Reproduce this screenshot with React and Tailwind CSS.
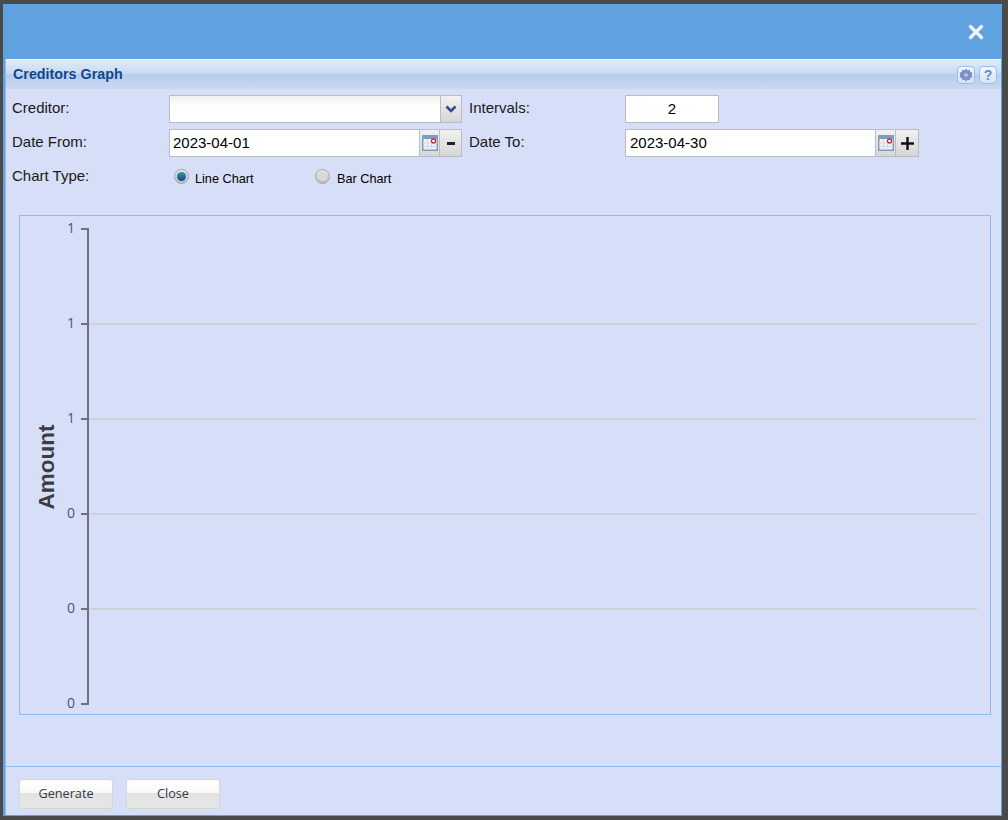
const ticks = [
  { y: 13, label: "1" },
  { y: 108, label: "1" },
  { y: 203, label: "1" },
  { y: 298, label: "0" },
  { y: 393, label: "0" },
  { y: 488, label: "0" },
];

function CalendarIcon() {
  return (
    <svg width="16" height="16" viewBox="0 0 16 16">
      <rect x="0.75" y="0.75" width="14.5" height="14.5" fill="#eef1f5" stroke="#7f9cc0" strokeWidth="1.5" />
      <rect x="1" y="1" width="14" height="3" fill="#7f9cc0" />
      <path d="M5.5 4v11M9.5 4v11M1 8h14M1 11.5h14" stroke="#d5dbe3" fill="none" />
      <circle cx="11.5" cy="6" r="2" fill="#fff" stroke="#b8303a" strokeWidth="1.3" />
    </svg>
  );
}

function SideButton({ className = "", children }) {
  return (
    <div className={"flex items-center justify-center h-full border border-l-0 border-[#b8bcc6] bg-gradient-to-b from-[#f1f1f1] to-[#d6d6d6] " + className}>
      {children}
    </div>
  );
}

function DateField({ value, className = "" }) {
  return (
    <div className={"flex items-center w-[251px] h-[28px] bg-white border border-[#b8bcc6] text-[15px] text-black " + className}>
      {value}
    </div>
  );
}

function TitleIcon({ children }) {
  return (
    <div className="flex items-center justify-center w-[18px] h-[18px] rounded-[4px] border border-[#9dbde8] bg-gradient-to-b from-[#f1f6fc] to-[#d5e3f5]">
      {children}
    </div>
  );
}

function Radio({ checked, label, className = "" }) {
  return (
    <div className={"flex items-start gap-[6px] text-[12.7px] leading-[16px] text-black " + className}>
      <div className="flex items-center justify-center w-[15px] h-[15px] rounded-full border border-[#a5a5a5] bg-gradient-to-b from-[#e8e8e8] to-[#bdbdbd]">
        {checked ? <div className="w-[9px] h-[9px] rounded-full bg-gradient-to-b from-[#3a93bd] to-[#0c4f78]" /> : <div className="w-[9px] h-[9px] rounded-full bg-[#d8d8d8]" />}
      </div>
      <span className="mt-[2px]">{label}</span>
    </div>
  );
}

function FooterButton({ label }) {
  return (
    <button className="w-[94px] h-[30px] rounded-[3px] border border-[#d6d6d6] bg-[linear-gradient(#ffffff_0%,#f8f8f8_48%,#e3e3e3_48%,#e6e6e6_100%)] text-[12.7px] text-[#333a44] [font-family:'Open_Sans',sans-serif]">
      {label}
    </button>
  );
}

export default function App() {
  return (
    <div className="w-[1008px] h-[820px] bg-[#4a4a4a] pt-[4px] pl-[3px] pr-[6px] pb-[4px] [font-family:'Liberation_Sans',Arial,sans-serif]">
      <div className="flex flex-col h-full bg-[#5fa2df]">
        {/* blue header */}
        <div className="flex items-center justify-end h-[55px] shrink-0 pr-[18px]">
          <svg width="16" height="16" viewBox="0 0 16 16">
            <path d="M2.5 2.5L13.5 13.5M13.5 2.5L2.5 13.5" stroke="#eef4fb" strokeWidth="3.4" strokeLinecap="round" />
          </svg>
        </div>

        <div className="flex flex-col flex-1 ml-[2px] mr-[1px] mb-[1px] bg-[#d6dff7] border-l border-[#8fbbee]">
          {/* title bar */}
          <div className="flex items-center justify-between h-[30px] shrink-0 pl-[7px] pr-[4px] border-t border-[#eef4fb] bg-[linear-gradient(#e0ebf8_0%,#c9dbf0_46%,#b4cdeb_48%,#c9d8f3_100%)]">
            <span className="text-[14.3px] font-bold text-[#10478f]">Creditors Graph</span>
            <div className="flex gap-[4px]">
              <TitleIcon>
                <svg width="14" height="14" viewBox="0 0 12 12">
                  <path d="M6 0.5l1.3 1.4 1.9-.3.5 1.8 1.8.7-.5 1.9.5 1.9-1.8.7-.5 1.8-1.9-.3L6 11.5l-1.3-1.4-1.9.3-.5-1.8L.5 7.9 1 6 .5 4.1l1.8-.7.5-1.8 1.9.3z" fill="#7d8fc9" />
                  <circle cx="6" cy="6" r="1.6" fill="#b9c6ec" />
                </svg>
              </TitleIcon>
              <TitleIcon>
                <span className="text-[14px] font-bold leading-none text-[#5f8fc4]">?</span>
              </TitleIcon>
            </div>
          </div>

          {/* form */}
          <div className="flex flex-col pl-[6px] pt-[6px] text-[15px] text-[#1a1a1a]">
            <div className="flex items-start h-[34px]">
              <div className="w-[157px] pt-[2px]">Creditor:</div>
              <div className="flex h-[28px] w-[293px]">
                <div className="w-[272px] bg-gradient-to-b from-[#eef1ef] to-white to-40% border border-[#b8bcc6]" />
                <SideButton className="w-[21px]">
                  <svg width="12" height="8" viewBox="0 0 12 8">
                    <path d="M1.5 1.5L6 6l4.5-4.5" stroke="#2f4f8f" strokeWidth="2.6" fill="none" />
                  </svg>
                </SideButton>
              </div>
              <div className="w-[163px] pl-[7px] pt-[2px]">Intervals:</div>
              <div className="flex items-center justify-center w-[94px] h-[28px] bg-white border border-[#b8bcc6] text-black">2</div>
            </div>

            <div className="flex items-start h-[33px]">
              <div className="w-[157px] pt-[2px]">Date From:</div>
              <div className="flex h-[28px] w-[293px]">
                <DateField value="2023-04-01" className="pl-[3px]" />
                <SideButton className="w-[20px]"><CalendarIcon /></SideButton>
                <SideButton className="w-[22px]">
                  <div className="w-[8px] h-[3px] bg-[#222]" />
                </SideButton>
              </div>
              <div className="w-[163px] pl-[7px] pt-[2px]">Date To:</div>
              <div className="flex h-[28px]">
                <DateField value="2023-04-30" className="pl-[4px]" />
                <SideButton className="w-[20px]"><CalendarIcon /></SideButton>
                <SideButton className="w-[23px]">
                  <svg width="15" height="15" viewBox="0 0 15 15">
                    <path d="M7.5 1v13M1 7.5h13" stroke="#111" strokeWidth="2.4" />
                  </svg>
                </SideButton>
              </div>
            </div>

            <div className="flex items-start h-[25px]">
              <div className="w-[162px] pt-[3px]">Chart Type:</div>
              <Radio checked label="Line Chart" className="w-[141px] pt-[7px]" />
              <Radio label="Bar Chart" className="pt-[7px] gap-[7px]" />
            </div>
          </div>

          {/* chart */}
          <div className="mt-[28px] ml-[13px] w-[972px] h-[500px] border border-[#8fbbee]">
            <svg width="970" height="498" viewBox="0 0 970 498" className="block">
              {ticks.map((t, i) => (
                <g key={i}>
                  {i > 0 && i < 5 && <line x1="68" x2="957" y1={t.y} y2={t.y} stroke="#cdd1d9" strokeWidth="2" />}
                  <line x1="61" x2="69" y1={t.y} y2={t.y} stroke="#6e7280" strokeWidth="2" />
                  <text x="55" y={t.y + 4} textAnchor="end" fontSize="14" fill="#44587a" fontFamily="Open Sans, sans-serif">{t.label}</text>
                </g>
              ))}
              <line x1="68" x2="68" y1="12" y2="489" stroke="#6e7280" strokeWidth="2" />
              <text transform="translate(34 251) rotate(-90)" textAnchor="middle" fontSize="22.5" fontWeight="700" fill="#3c3c44" fontFamily="Liberation Sans, Arial, sans-serif">Amount</text>
            </svg>
          </div>

          {/* footer */}
          <div className="mt-auto h-[49px] shrink-0 flex gap-[13px] items-start pt-[12px] pl-[13px] border-t border-[#8fbbee]">
            <FooterButton label="Generate" />
            <FooterButton label="Close" />
          </div>
        </div>
      </div>
    </div>
  );
}
